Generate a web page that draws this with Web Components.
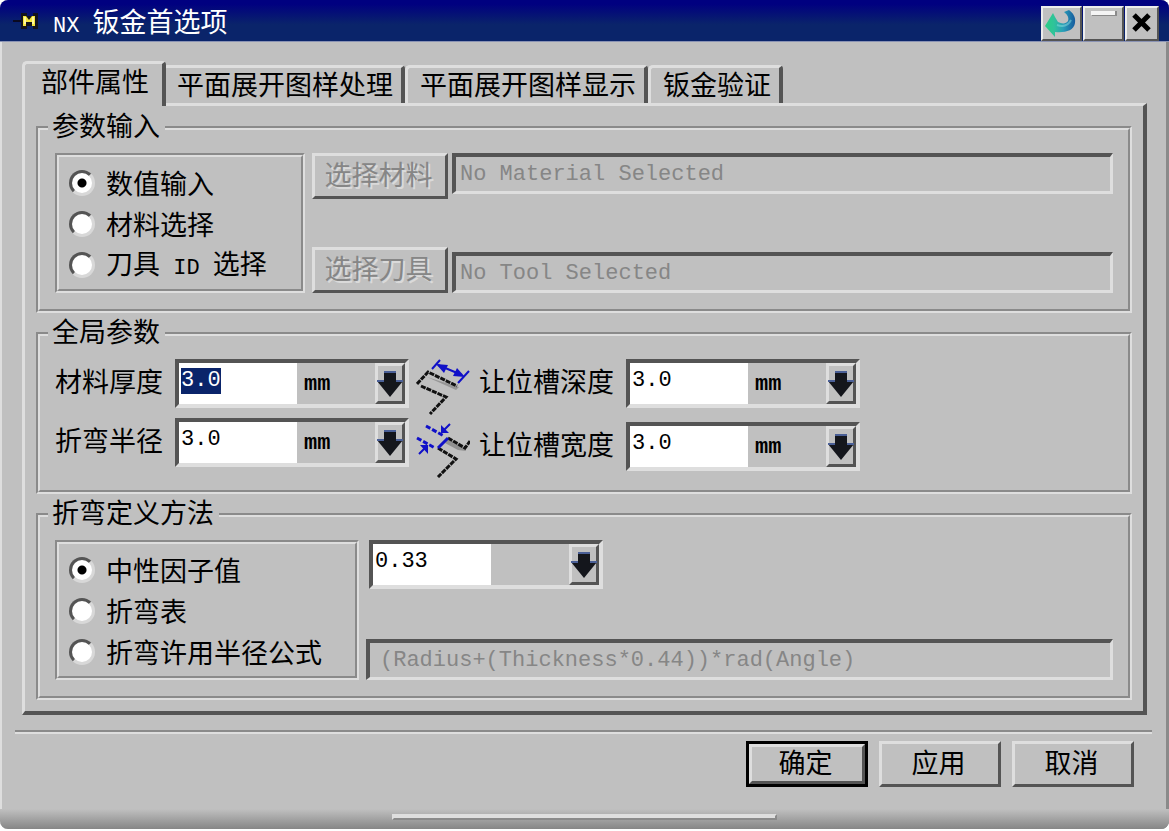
<!DOCTYPE html>
<html lang="zh-CN">
<head>
<meta charset="utf-8">
<title>NX 钣金首选项</title>
<style>
  :root {
    --face: #c0c0c0;
    --light: #dedede;
    --shade: #8a8a8a;
    --dark: #545454;
    --navy: #0a246a;
    --mono: "Liberation Mono", "Noto Sans CJK SC", monospace;
  }
  body {
    margin: 0;
    background: #fff;
    color: #000;
    font: 27px/28px "Noto Sans CJK SC", sans-serif;
  }
</style>
</head>
<body>

<nx-dialog>
  <span slot="title"><nx-latin>NX </nx-latin>钣金首选项</span>

  <nx-tabs labels="部件属性,平面展开图样处理,平面展开图样显示,钣金验证">
    <nx-group legend="参数输入">
      <nx-columns>
        <nx-radio-group name="input" label="参数输入" options="数值输入,材料选择,刀具 ID 选择" checked="0" style="width: 250px"></nx-radio-group>
        <nx-stack class="grow">
          <nx-picker button="选择材料" value="No Material Selected"></nx-picker>
          <nx-picker button="选择刀具" value="No Tool Selected" low></nx-picker>
        </nx-stack>
      </nx-columns>
    </nx-group>

    <nx-group legend="全局参数">
      <nx-columns>
        <nx-values tight>
          <nx-value label="材料厚度" value="3.0" unit="mm" active></nx-value>
          <nx-value label="折弯半径" value="3.0" unit="mm"></nx-value>
        </nx-values>
        <nx-values>
          <nx-value label="让位槽深度" value="3.0" unit="mm">
            <nx-relief-icon kind="depth"></nx-relief-icon>
          </nx-value>
          <nx-value label="让位槽宽度" value="3.0" unit="mm">
            <nx-relief-icon kind="width"></nx-relief-icon>
          </nx-value>
        </nx-values>
      </nx-columns>
    </nx-group>

    <nx-group legend="折弯定义方法">
      <nx-columns>
        <nx-radio-group name="bend" label="折弯定义方法" options="中性因子值,折弯表,折弯许用半径公式" checked="0" style="width: 304px"></nx-radio-group>
        <nx-stack class="grow">
          <nx-value value="0.33" name="中性因子值"></nx-value>
          <nx-readout value="(Radius+(Thickness*0.44))*rad(Angle)" name="折弯许用半径公式" indent></nx-readout>
        </nx-stack>
      </nx-columns>
    </nx-group>
  </nx-tabs>

  <nx-button slot="actions" primary>确定</nx-button>
  <nx-button slot="actions">应用</nx-button>
  <nx-button slot="actions">取消</nx-button>
</nx-dialog>

<script>
// Shared by every element: open shadow root, markup from render()
class NxElement extends HTMLElement {
  constructor() {
    super();
    this.attachShadow({ mode: 'open' });
  }

  connectedCallback() {
    this.shadowRoot.innerHTML = this.render();
    this.ready();
  }

  attr(name, fallback = '') {
    return this.getAttribute(name) ?? fallback;
  }

  list(name) {
    return this.attr(name).split(',');
  }

  ready() {}
}

// Half-width text set inside a Chinese label
class NxLatin extends NxElement {
  render() {
    return `
      <style>
        :host { display: inline; font-family: var(--mono); font-size: 22px; line-height: 1; }
      </style><slot></slot>`;
  }
}

class NxDialog extends NxElement {
  render() {
    return `
      <style>
        :host {
          box-sizing: border-box;
          display: flex;
          flex-direction: column;
          min-height: 100vh;
          padding-bottom: 2px;
        }
        .frame {
          flex: 1;
          display: flex;
          flex-direction: column;
          background: var(--face);
          border-radius: 8px;
          overflow: hidden;
          box-shadow: inset 2px 0 var(--light), inset -3px 0 var(--shade);
        }
        header {
          display: flex;
          align-items: center;
          height: 42px;
          padding: 0 10px 0 12px;
          background: linear-gradient(#000080, #000080 10%, #0a246a 60%, #0a246a);
          border-bottom: 1px solid #8a93b4;
          color: #fff;
          box-sizing: border-box;
        }
        .pin { width: 27px; height: 18px; }
        h1 {
          flex: 1;
          margin: 0 0 0 14px;
          font: inherit;
          line-height: 40px;
          white-space: nowrap;
        }
        .tools { display: flex; gap: 1px; align-self: flex-end; }
        .tools button {
          box-sizing: border-box;
          width: 41px;
          height: 35px;
          padding: 0;
          border: 2px solid;
          border-color: #ececec var(--dark) var(--dark) #ececec;
          background: var(--face);
        }
        .tools .close { width: 34px; }
        .tools svg { display: block; width: 100%; height: 100%; }
        main { padding: 19px 22px 0; }
        hr {
          height: 2px;
          margin: 15px 17px 7px 15px;
          border: 0;
          border-top: 2px solid var(--shade);
          background: var(--light);
        }
        .actions {
          display: flex;
          justify-content: flex-end;
          gap: 11px;
          padding: 0 35px;
        }
        footer {
          display: flex;
          justify-content: center;
          height: 20px;
          margin-top: auto;
          background: linear-gradient(var(--face), #868686);
        }
        .grip {
          box-sizing: border-box;
          width: 33%;
          height: 6px;
          margin-top: 5px;
          border: 2px solid;
          border-color: var(--light) var(--shade) var(--shade) var(--light);
          background: var(--light);
        }
      </style>
      <div class="frame">
        <header>
          <svg class="pin" viewBox="0 0 27 18" aria-hidden="true">
            <path d="M1 9h9" stroke="#0a0a20" stroke-width="2"/>
            <path d="M9 1h6v3h6V1h5v16h-5v-3h-6v3H9z" fill="#14141c"/>
            <path d="M11 4h3l3 4 3-4h3v10h-3v-4h-6v4h-3z" fill="#f4e53c"/>
            <path d="M12 5h2v7h-2zM20 5h2v7h-2z" fill="#fff8a0"/>
          </svg>
          <h1><slot name="title"></slot></h1>
          <div class="tools">
            <button type="button" aria-label="重置">
              <svg viewBox="0 0 37 31" aria-hidden="true">
                <defs>
                  <linearGradient id="turn" x1="0" x2="1">
                    <stop offset="0" stop-color="#2bcf84"/>
                    <stop offset=".3" stop-color="#30c39a"/>
                    <stop offset=".6" stop-color="#2a9fb8"/>
                    <stop offset="1" stop-color="#155a9e"/>
                  </linearGradient>
                </defs>
                <path d="M10 5L2 18l10 11v-5c9 1 19-1 20-9 1-6-2-10-6-13l-5 2c4 3 5 6 4 9-2 3-6 3-10 1l-3-5z" fill="url(#turn)"/>
                <path d="M14 17c6 2 11 1 14-5" fill="none" stroke="#8be0e0" stroke-width="2" opacity=".5"/>
              </svg>
            </button>
            <button type="button" aria-label="最小化">
              <svg viewBox="0 0 37 31" aria-hidden="true">
                <path d="M7 3h25v5H7z" fill="#8a8a8a"/>
                <path d="M6 3h24v4H6z" fill="#f4f4f4"/>
              </svg>
            </button>
            <button type="button" class="close" aria-label="关闭">
              <svg viewBox="0 0 30 31" aria-hidden="true">
                <path d="M7 7l15 15M22 7L7 22" stroke="#000" stroke-width="5"/>
              </svg>
            </button>
          </div>
        </header>
        <main><slot></slot></main>
        <hr>
        <div class="actions"><slot name="actions"></slot></div>
        <footer><div class="grip"></div></footer>
      </div>`;
  }
}

class NxTabs extends NxElement {
  render() {
    const tabs = this.list('labels').map((label, i) =>
      `<button type="button" role="tab" aria-selected="${i === 0}">${label}</button>`);
    return `
      <style>
        :host { display: block; }
        .bar { display: flex; align-items: flex-end; height: 42px; }
        button {
          box-sizing: border-box;
          height: 38px;
          padding: 0 8px 4px 12px;
          border: 3px solid var(--light);
          border-right: 4px solid var(--dark);
          border-bottom: 0;
          border-radius: 5px 4px 0 0;
          background: var(--face);
          color: inherit;
          font: inherit;
          white-space: nowrap;
        }
        button[aria-selected="true"] {
          position: relative;
          height: 45px;
          margin: 0 -4px -3px 0;
          padding: 0 13px 8px 16px;
        }
        .panel {
          padding: 6px 11px 11px;
          border: 3px solid;
          border-color: var(--light) var(--dark) var(--dark) var(--light);
          border-right-width: 4px;
          border-bottom-width: 4px;
        }
        ::slotted(*) { margin-bottom: 5px; }
        ::slotted(:last-child) { margin-bottom: 0; }
      </style>
      <div class="bar" role="tablist">${tabs.join('')}</div>
      <div class="panel" role="tabpanel"><slot></slot></div>`;
  }

  ready() {
    const tabs = [...this.shadowRoot.querySelectorAll('[role=tab]')];
    tabs.forEach(tab => {
      tab.onclick = () => tabs.forEach(t => t.setAttribute('aria-selected', t === tab));
    });
  }
}

class NxGroup extends NxElement {
  render() {
    return `
      <style>
        :host { display: block; }
        fieldset {
          min-width: 0;
          margin: 0;
          padding: 9px 15px 16px;
          border: 4px groove var(--light);
        }
        legend {
          margin-left: -7px;
          padding: 0 5px 6px 4px;
          line-height: 26px;
        }
      </style>
      <fieldset><legend>${this.attr('legend')}</legend><slot></slot></fieldset>`;
  }
}

class NxColumns extends NxElement {
  render() {
    return `
      <style>
        :host { display: flex; gap: 7px; }
        ::slotted(*) { flex: none; }
        ::slotted(.grow) { flex: 1; min-width: 0; }
      </style>
      <slot></slot>`;
  }
}

// First child at the top, last one at the bottom of the row
class NxStack extends NxElement {
  render() {
    return `
      <style>
        :host { display: flex; flex-direction: column; justify-content: space-between; }
        ::slotted(nx-value) { margin-left: 3px; }
      </style>
      <slot></slot>`;
  }
}

class NxValues extends NxElement {
  render() {
    return `
      <style>
        :host { display: flex; flex-direction: column; gap: 14px; padding-bottom: 3px; }
        :host([tight]) { gap: 10px; }
      </style>
      <slot></slot>`;
  }
}

class NxRadioGroup extends NxElement {
  render() {
    const name = this.attr('name');
    const checked = Number(this.attr('checked', '-1'));
    const rows = this.list('options').map((text, i) => `
      <label>
        <input type="radio" name="${name}" ${i === checked ? 'checked' : ''}>
        <span>${text.replace(/ [A-Z]+ /, m => `<nx-latin>${m}</nx-latin>`)}</span>
      </label>`);
    return `
      <style>
        :host {
          box-sizing: border-box;
          display: block;
          padding: 5px 0 4px 10px;
          border: 4px groove var(--light);
        }
        label {
          display: flex;
          align-items: center;
          gap: 11px;
          height: 41px;
          white-space: nowrap;
        }
        input {
          appearance: none;
          box-sizing: border-box;
          width: 26px;
          height: 26px;
          margin: 0;
          border: 3px solid;
          border-color: var(--dark) #d8d8d8 #d8d8d8 var(--dark);
          border-radius: 50%;
          background: #fff;
        }
        input:checked { background: radial-gradient(circle, #000 4px, #fff 5px); }
      </style>
      <div role="radiogroup" aria-label="${this.attr('label')}">${rows.join('')}</div>`;
  }
}

class NxButton extends NxElement {
  render() {
    return `
      <style>
        :host { display: block; }
        button {
          box-sizing: border-box;
          width: 100%;
          min-width: 122px;
          height: 46px;
          padding: 0 3px 4px 0;
          border: 3px solid;
          border-color: var(--light) var(--dark) var(--dark) var(--light);
          background: var(--face);
          color: inherit;
          font: inherit;
          white-space: nowrap;
        }
        :host([primary]) button { outline: 3px solid #000; outline-offset: -3px; border-width: 6px; }
        button:disabled { color: #868686; text-shadow: 2px 2px #dadada; }
      </style>
      <button type="button" ${this.hasAttribute('disabled') ? 'disabled' : ''}><slot></slot></button>`;
  }
}

class NxReadout extends NxElement {
  render() {
    return `
      <style>
        :host { display: block; }
        input {
          box-sizing: border-box;
          display: block;
          width: 100%;
          height: 41px;
          padding: 0 4px;
          border: 4px solid;
          border-color: var(--dark) var(--light) var(--light) var(--dark);
          border-right-width: 3px;
          border-bottom-width: 3px;
          background: var(--face);
          color: #868686;
          font: 22px/26px var(--mono);
        }
        :host([indent]) input { padding-left: 10px; }
      </style>
      <input type="text" aria-label="${this.attr('name')}" value="${this.attr('value')}" disabled>`;
  }
}

class NxPicker extends NxElement {
  render() {
    return `
      <style>
        :host { display: flex; align-items: flex-start; gap: 4px; }
        :host([low]) { align-items: flex-end; }
        nx-button { width: 136px; }
        nx-readout { flex: 1; }
      </style>
      <nx-button disabled>${this.attr('button')}</nx-button>
      <nx-readout name="${this.attr('button')}" value="${this.attr('value')}"></nx-readout>`;
  }
}

class NxValue extends NxElement {
  render() {
    const label = this.attr('label');
    const name = label ? '' : `aria-label="${this.attr('name')}"`;
    return `
      <style>
        :host { display: flex; align-items: flex-start; height: 49px; }
        label { margin-right: 12px; line-height: 44px; white-space: nowrap; }
        .box {
          box-sizing: border-box;
          display: flex;
          width: 234px;
          height: 49px;
          border: 4px solid;
          border-color: var(--dark) var(--light) var(--light) var(--dark);
        }
        input {
          box-sizing: border-box;
          width: 118px;
          padding: 0 0 6px 2px;
          border: 0;
          outline: 0;
          background: #fff;
          color: #000;
          font: 22px/26px var(--mono);
        }
        input::selection { background: var(--navy); color: #fff; }
        .unit {
          flex: 1;
          padding-left: 7px;
          font: bold 22px/44px var(--mono);
        }
        button {
          box-sizing: border-box;
          width: 30px;
          padding: 0;
          border: 3px solid;
          border-color: var(--light) var(--dark) var(--dark) var(--light);
          background: var(--face);
        }
        svg { display: block; width: 26px; height: 30px; margin: 0 -1px; }
      </style>
      <slot></slot>
      ${label ? `<label for="value">${label}</label>` : ''}
      <div class="box">
        <input id="value" type="text" value="${this.attr('value')}" ${name}>
        <span class="unit">${this.attr('unit')}</span>
        <button type="button" aria-label="选项">
          <svg viewBox="0 0 26 30" aria-hidden="true">
            <path d="M7 2h12v10h7L13 28 0 12h7z" fill="#14161c"/>
            <path d="M7 3h12M0 12h7M19 12h7" stroke="#4a5f96" stroke-width="2"/>
          </svg>
        </button>
      </div>`;
  }

  ready() {
    if (this.hasAttribute('active')) {
      const input = this.shadowRoot.querySelector('input');
      input.focus();
      input.select();
    }
  }
}

class NxReliefIcon extends NxElement {
  static drawings = {
    depth: `
      <path d="M11 15l29 13 3-3-29-9z" fill="#858585" opacity=".7" transform="translate(0 3)"/>
      <path d="M1 25L12 13l29 14M5 27l25 11-16 17" fill="none" stroke="#111" stroke-width="3" stroke-dasharray="5 1"/>
      <g stroke="#1010c8" stroke-width="2" fill="#1010c8">
        <path d="M24 1l-8 9M53 12L42 24M22 6l24 10"/>
        <path d="M20 5l12 1-4 8zM49 18l-12-1 4-8z" stroke="none"/>
      </g>`,
    width: `
      <path d="M32 17l17 9 1 3-8-1-13-7z" fill="#858585" opacity=".8"/>
      <path d="M32 16l17 10 5-7M22 26l18 11-18 18" fill="none" stroke="#111" stroke-width="3" stroke-dasharray="5 1"/>
      <g stroke="#1010c8" stroke-width="3" fill="#1010c8">
        <path d="M32 16L22 26"/>
        <path d="M10 4l18 10M1 16l18 10" stroke-dasharray="5 2"/>
        <path d="M34 2l-7 7M3 32l7-7" stroke-width="2"/>
        <path d="M25 11V3l8 8zM12 23v9l-8-9z" stroke="none"/>
      </g>`
  };

  render() {
    return `
      <style>
        :host { display: block; width: 54px; margin-right: 9px; }
        svg { display: block; width: 54px; height: 56px; }
      </style>
      <svg viewBox="0 0 54 56" aria-hidden="true">${NxReliefIcon.drawings[this.attr('kind')]}</svg>`;
  }
}

customElements.define('nx-latin', NxLatin);
customElements.define('nx-dialog', NxDialog);
customElements.define('nx-tabs', NxTabs);
customElements.define('nx-group', NxGroup);
customElements.define('nx-columns', NxColumns);
customElements.define('nx-stack', NxStack);
customElements.define('nx-values', NxValues);
customElements.define('nx-radio-group', NxRadioGroup);
customElements.define('nx-button', NxButton);
customElements.define('nx-readout', NxReadout);
customElements.define('nx-picker', NxPicker);
customElements.define('nx-value', NxValue);
customElements.define('nx-relief-icon', NxReliefIcon);
</script>
</body>
</html>
